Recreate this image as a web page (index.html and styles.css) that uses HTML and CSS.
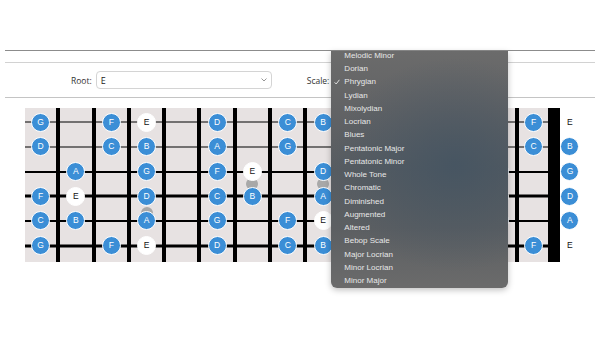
FILE: index.html
```html
<!DOCTYPE html>
<html>
<head>
<meta charset="utf-8">
<link rel="stylesheet" href="styles.css">
</head>
<body>
<div class="page">
  <div class="rule rule-dark"></div>
  <div class="rule rule-light"></div>
  <div class="controls">
    <label class="label">Root:</label>
    <div class="select root-select"><span>E</span><svg class="chev" viewBox="0 0 6 4" width="6" height="4"><path d="M0.5 0.5 L3 3 L5.5 0.5" fill="none" stroke="#8a8a8a" stroke-width="0.9"/></svg></div>
    <label class="label scale-label">Scale:</label>
    <div class="select scale-select"><span>Phrygian</span><svg class="chev" viewBox="0 0 6 4" width="6" height="4"><path d="M0.5 0.5 L3 3 L5.5 0.5" fill="none" stroke="#8a8a8a" stroke-width="0.9"/></svg>
      <div class="menu">
        <ul class="menu-list">
          <li class="item">Melodic Minor</li>
          <li class="item">Dorian</li>
          <li class="item selected"><svg class="check" viewBox="0 0 6 6" width="6" height="6"><path d="M0.6 3.3 L2.2 5 L5.4 0.8" fill="none" stroke="#eaeaea" stroke-width="0.9"/></svg>Phrygian</li>
          <li class="item">Lydian</li>
          <li class="item">Mixolydian</li>
          <li class="item">Locrian</li>
          <li class="item">Blues</li>
          <li class="item">Pentatonic Major</li>
          <li class="item">Pentatonic Minor</li>
          <li class="item">Whole Tone</li>
          <li class="item">Chromatic</li>
          <li class="item">Diminished</li>
          <li class="item">Augmented</li>
          <li class="item">Altered</li>
          <li class="item">Bebop Scale</li>
          <li class="item">Major Locrian</li>
          <li class="item">Minor Locrian</li>
          <li class="item">Minor Major</li>
        </ul>
      </div>
    </div>
  </div>
  <div class="rule rule-mid"></div>

  <div class="board">
    <div class="fretboard">
      <!-- fret 15 -->
      <div class="fret">
        <div class="cell"><span class="note">G</span></div>
        <div class="cell"><span class="note">D</span></div>
        <div class="cell"></div>
        <div class="cell"><span class="note">F</span></div>
        <div class="cell"><span class="note">C</span></div>
        <div class="cell"><span class="note">G</span></div>
      </div>
      <!-- fret 14 -->
      <div class="fret">
        <div class="cell"></div>
        <div class="cell"></div>
        <div class="cell"><span class="note">A</span></div>
        <div class="cell"><span class="note root">E</span></div>
        <div class="cell"><span class="note">B</span></div>
        <div class="cell"></div>
      </div>
      <!-- fret 13 -->
      <div class="fret">
        <div class="cell"><span class="note">F</span></div>
        <div class="cell"><span class="note">C</span></div>
        <div class="cell"></div>
        <div class="cell"></div>
        <div class="cell"></div>
        <div class="cell"><span class="note">F</span></div>
      </div>
      <!-- fret 12 -->
      <div class="fret">
        <span class="dot dot-upper"></span>
        <span class="dot dot-lower"></span>
        <div class="cell"><span class="note root">E</span></div>
        <div class="cell"><span class="note">B</span></div>
        <div class="cell"><span class="note">G</span></div>
        <div class="cell"><span class="note">D</span></div>
        <div class="cell"><span class="note">A</span></div>
        <div class="cell"><span class="note root">E</span></div>
      </div>
      <!-- fret 11 -->
      <div class="fret">
        <div class="cell"></div>
        <div class="cell"></div>
        <div class="cell"></div>
        <div class="cell"></div>
        <div class="cell"></div>
        <div class="cell"></div>
      </div>
      <!-- fret 10 -->
      <div class="fret">
        <div class="cell"><span class="note">D</span></div>
        <div class="cell"><span class="note">A</span></div>
        <div class="cell"><span class="note">F</span></div>
        <div class="cell"><span class="note">C</span></div>
        <div class="cell"><span class="note">G</span></div>
        <div class="cell"><span class="note">D</span></div>
      </div>
      <!-- fret 9 -->
      <div class="fret">
        <span class="dot dot-mid"></span>
        <div class="cell"></div>
        <div class="cell"></div>
        <div class="cell"><span class="note root">E</span></div>
        <div class="cell"><span class="note">B</span></div>
        <div class="cell"></div>
        <div class="cell"></div>
      </div>
      <!-- fret 8 -->
      <div class="fret">
        <div class="cell"><span class="note">C</span></div>
        <div class="cell"><span class="note">G</span></div>
        <div class="cell"></div>
        <div class="cell"></div>
        <div class="cell"><span class="note">F</span></div>
        <div class="cell"><span class="note">C</span></div>
      </div>
      <!-- fret 7 -->
      <div class="fret">
        <span class="dot dot-mid"></span>
        <div class="cell"><span class="note">B</span></div>
        <div class="cell"></div>
        <div class="cell"><span class="note">D</span></div>
        <div class="cell"><span class="note">A</span></div>
        <div class="cell"><span class="note root">E</span></div>
        <div class="cell"><span class="note">B</span></div>
      </div>
      <!-- fret 6 -->
      <div class="fret">
        <div class="cell"></div>
        <div class="cell"><span class="note">F</span></div>
        <div class="cell"></div>
        <div class="cell"></div>
        <div class="cell"></div>
        <div class="cell"></div>
      </div>
      <!-- fret 5 -->
      <div class="fret">
        <span class="dot dot-mid"></span>
        <div class="cell"><span class="note">A</span></div>
        <div class="cell"><span class="note root">E</span></div>
        <div class="cell"><span class="note">C</span></div>
        <div class="cell"><span class="note">G</span></div>
        <div class="cell"><span class="note">D</span></div>
        <div class="cell"><span class="note">A</span></div>
      </div>
      <!-- fret 4 -->
      <div class="fret">
        <div class="cell"></div>
        <div class="cell"></div>
        <div class="cell"><span class="note">B</span></div>
        <div class="cell"></div>
        <div class="cell"></div>
        <div class="cell"></div>
      </div>
      <!-- fret 3 -->
      <div class="fret">
        <span class="dot dot-mid"></span>
        <div class="cell"><span class="note">G</span></div>
        <div class="cell"><span class="note">D</span></div>
        <div class="cell"></div>
        <div class="cell"><span class="note">F</span></div>
        <div class="cell"><span class="note">C</span></div>
        <div class="cell"><span class="note">G</span></div>
      </div>
      <!-- fret 2 -->
      <div class="fret">
        <div class="cell"></div>
        <div class="cell"></div>
        <div class="cell"><span class="note">A</span></div>
        <div class="cell"><span class="note root">E</span></div>
        <div class="cell"><span class="note">B</span></div>
        <div class="cell"></div>
      </div>
      <!-- fret 1 -->
      <div class="fret fret-first">
        <div class="cell"><span class="note">F</span></div>
        <div class="cell"><span class="note">C</span></div>
        <div class="cell"></div>
        <div class="cell"></div>
        <div class="cell"></div>
        <div class="cell"><span class="note">F</span></div>
      </div>
      <div class="nut"></div>
    </div>
    <div class="open">
      <div class="open-cell"><span class="note root">E</span></div>
      <div class="open-cell"><span class="note">B</span></div>
      <div class="open-cell"><span class="note">G</span></div>
      <div class="open-cell"><span class="note">D</span></div>
      <div class="open-cell"><span class="note">A</span></div>
      <div class="open-cell"><span class="note root">E</span></div>
    </div>
  </div>
</div>
</body>
</html>
```

FILE: styles.css
```css
html, body {
  margin: 0;
  padding: 0;
  background: #ffffff;
}

body {
  font-family: "Open Sans", "Liberation Sans", sans-serif;
  color: #333;
}

.page {
  box-sizing: border-box;
  min-height: 339px;
  padding-top: 50px;
}

.rule {
  height: 1px;
  margin: 0 5px;
}

.rule-dark {
  background: #8c8c8c;
}

.rule-light {
  background: #d2d2d2;
  margin-top: 11px;
}

.rule-mid {
  background: #c4c4c4;
}

/* Controls */
.controls {
  display: flex;
  align-items: center;
  height: 34px;
  padding-left: 71px;
}

.label {
  font-size: 8.5px;
  color: #333;
  margin-right: 4px;
}

.scale-label {
  margin-left: 35px;
  margin-right: 3px;
}

.select {
  position: relative;
  box-sizing: border-box;
  width: 176px;
  height: 18px;
  border: 1px solid #d4d4d4;
  border-radius: 4px;
  display: flex;
  align-items: center;
  justify-content: space-between;
  padding: 0 4px 0 4px;
  font-size: 9px;
  color: #222;
  background: #fff;
}

.chev {
  display: block;
}

/* Dropdown menu */
.menu {
  position: absolute;
  left: -2px;
  top: -21px;
  width: 177px;
  height: 237px;
  border-radius: 0 0 6px 6px;
  overflow: hidden;
  z-index: 10;
  background:
    radial-gradient(ellipse 70% 45% at 70% 48%, rgba(68, 84, 98, 0.85), rgba(68, 84, 98, 0) 100%),
    linear-gradient(180deg, #6b6b6b 0%, #626365 25%, #575c61 50%, #5c5f62 75%, #6b6b6b 100%);
  box-shadow: 0 2px 6px rgba(0, 0, 0, 0.25);
}

.menu-list {
  list-style: none;
  margin: -2.3px 0 0 0;
  padding: 0;
}

.item {
  position: relative;
  height: 13.25px;
  display: flex;
  align-items: center;
  padding-left: 13px;
  font-family: "Liberation Sans", Arial, sans-serif;
  font-size: 8px;
  color: #e8e8e8;
  white-space: nowrap;
}

.check {
  position: absolute;
  left: 3px;
  top: 4px;
}

/* Fretboard */
.board {
  display: flex;
  margin: 10px 0 0 25px;
}

.fretboard {
  display: flex;
  height: 154px;
  background: #e7e2e2;
}

.fret {
  position: relative;
  flex: 0 0 35.3px;
  box-sizing: border-box;
  border-right: 4px solid #000;
  display: flex;
  flex-direction: column;
  padding: 2px 0 4px 0;
}

.fret-first {
  flex-basis: 28.8px;
  border-right: 0;
}

.nut {
  flex: 0 0 12px;
  background: #000;
}

.cell {
  position: relative;
  height: 24.67px;
  display: flex;
  align-items: center;
  justify-content: center;
}

.cell::before {
  content: "";
  position: absolute;
  left: 0;
  right: 0;
  top: 50%;
  height: 1px;
  background: #000;
  transform: translateY(-50%);
}

.cell:nth-of-type(3)::before { height: 2px; }
.cell:nth-of-type(4)::before { height: 3px; }
.cell:nth-of-type(5)::before { height: 2px; }
.cell:nth-of-type(6)::before { height: 3px; }

.dot {
  position: absolute;
  left: 50%;
  width: 12px;
  height: 12px;
  margin-left: -6px;
  border-radius: 50%;
  background: #a8a8a8;
}

.dot-mid { top: 70px; }
.dot-upper { top: 34px; }
.dot-lower { top: 99px; }

.note {
  position: relative;
  z-index: 1;
  box-sizing: border-box;
  width: 19px;
  height: 19px;
  border: 1px solid #fff;
  border-radius: 50%;
  background: #3b8ed6;
  color: #fff;
  font-family: "Liberation Sans", Arial, sans-serif;
  font-size: 8.5px;
  line-height: 17px;
  text-align: center;
}

.note.root {
  background: #fff;
  color: #111;
}

.open {
  display: flex;
  flex-direction: column;
  padding: 2px 0 4px 0;
  width: 20px;
}

.open-cell {
  height: 24.67px;
  display: flex;
  align-items: center;
  justify-content: center;
}
```
